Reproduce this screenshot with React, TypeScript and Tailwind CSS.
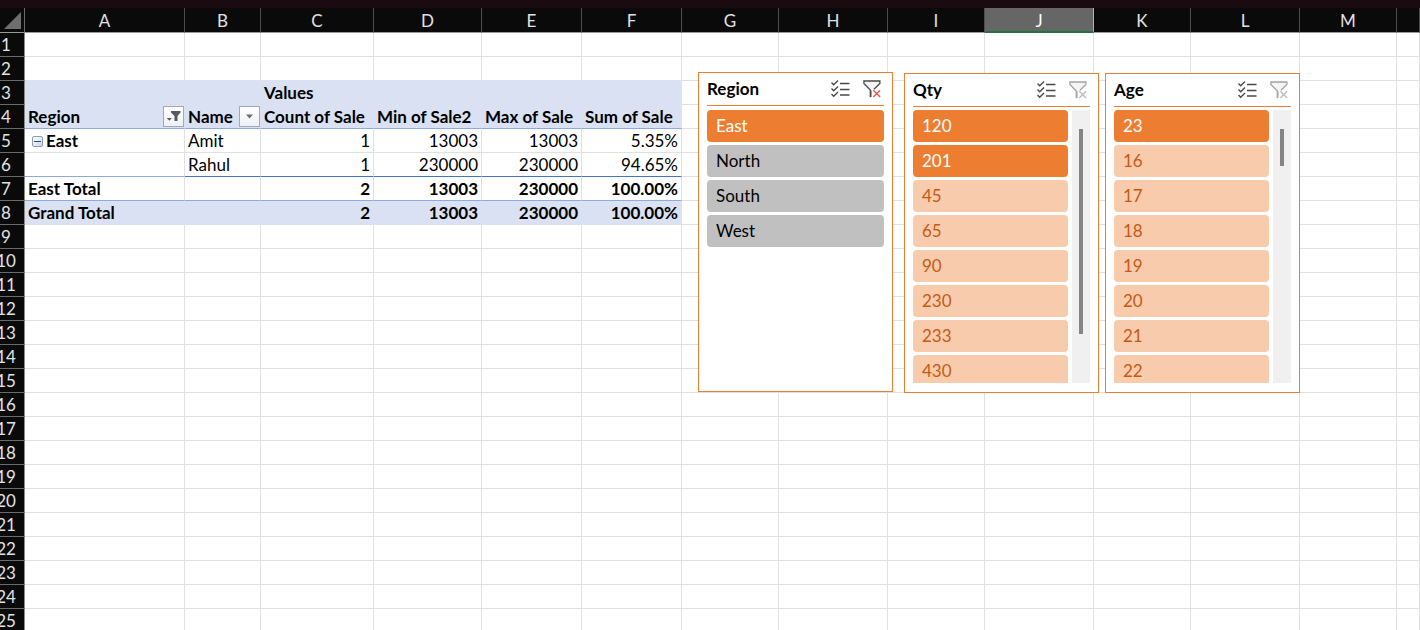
import type { ReactNode } from "react";

type Column = { letter: string; width: string; selected?: boolean };

const columns: Column[] = [
  { letter: "A", width: "w-[160px]" },
  { letter: "B", width: "w-[76px]" },
  { letter: "C", width: "w-[113px]" },
  { letter: "D", width: "w-[108px]" },
  { letter: "E", width: "w-[100px]" },
  { letter: "F", width: "w-[100px]" },
  { letter: "G", width: "w-[97px]" },
  { letter: "H", width: "w-[109px]" },
  { letter: "I", width: "w-[97px]" },
  { letter: "J", width: "w-[109px]", selected: true },
  { letter: "K", width: "w-[97px]" },
  { letter: "L", width: "w-[109px]" },
  { letter: "M", width: "w-[97px]" },
  { letter: "", width: "w-auto" },
];

const PIVOT_COLUMNS = 6;
const ROW_COUNT = 25;

function FilterButton({ label, active = false }: { label: string; active?: boolean }) {
  return (
    <button
      type="button"
      aria-label={label}
      className="flex size-[21px] shrink-0 items-center justify-center border border-[#a3a9b3] bg-linear-to-b from-white to-[#eef0f4]"
    >
      {active ? (
        <svg width="15" height="13" viewBox="0 0 15 13" fill="#58595b">
          <path d="M5 1h9.5v1.5L11.5 6v5h-3V6L5 2.5z" />
          <path d="M0.8 8h5L3.3 10.8z" />
        </svg>
      ) : (
        <svg width="9" height="5" viewBox="0 0 9 5" fill="#6b6d70">
          <path d="M1 0.5h7L4.5 4.5z" />
        </svg>
      )}
    </button>
  );
}

function FieldHeader({ name, active }: { name: string; active?: boolean }) {
  return (
    <div className="flex h-[23px] items-center justify-between">
      <span>{name}</span>
      <FilterButton label={`Filter ${name}`} active={active} />
    </div>
  );
}

function CollapsibleItem({ name }: { name: string }) {
  return (
    <div className="flex items-center gap-[3px] pl-1">
      <button
        type="button"
        aria-label={`Collapse ${name}`}
        className="mt-[2px] flex size-[11px] items-center justify-center rounded-[2px] border border-[#8c9cb4] bg-linear-to-br from-white to-[#cfd6e2]"
      >
        <span className="h-px w-[7px] bg-[#2f4a78]" />
      </button>
      <span>{name}</span>
    </div>
  );
}

const pivot: Record<number, ReactNode[]> = {
  3: ["", "", "Values", "", "", ""],
  4: [
    <FieldHeader name="Region" active />,
    <FieldHeader name="Name" />,
    "Count of Sale",
    "Min of Sale2",
    "Max of Sale",
    "Sum of Sale",
  ],
  5: [<CollapsibleItem name="East" />, "Amit", "1", "13003", "13003", "5.35%"],
  6: ["", "Rahul", "1", "230000", "230000", "94.65%"],
  7: ["East Total", "", "2", "13003", "230000", "100.00%"],
  8: ["Grand Total", "", "2", "13003", "230000", "100.00%"],
};

function cellStyle(row: number, col: number): string {
  const base = "h-6 p-0 border-r border-b whitespace-nowrap leading-[23px]";
  if (col >= PIVOT_COLUMNS || row < 2 || row > 8) return `${base} border-[#e0e0e0]`;
  const align = row > 4 && col > 1 ? "text-right pr-[3px]" : "text-left pl-[3px]";
  switch (row) {
    case 2:
      return `${base} border-r-[#e0e0e0] border-b-[#d9e1f2]`;
    case 3:
      return `${base} ${align} border-[#d9e1f2] bg-[#d9e1f2] font-bold`;
    case 4:
      return `${base} ${align} border-r-[#d9e1f2] border-b-[#8ea9db] bg-[#d9e1f2] font-bold`;
    case 5:
      return `${base} ${align} border-[#e0e0e0] ${col === 0 ? "font-bold" : ""}`;
    case 6:
      return `${base} ${align} border-r-[#e0e0e0] ${col === 0 ? "border-b-[#8ea9db]" : "border-b-[#4472c4]"}`;
    case 7:
      return `${base} ${align} border-r-[#e0e0e0] border-b-[#8ea9db] font-bold`;
    default:
      return `${base} ${align} border-[#d9e1f2] bg-[#d9e1f2] font-bold`;
  }
}

function Sheet() {
  return (
    <table className="w-full table-fixed border-separate border-spacing-0 text-black">
      <colgroup>
        <col className="w-[25px]" />
        {columns.map((c, i) => (
          <col key={i} className={c.width} />
        ))}
      </colgroup>
      <thead>
        <tr className="bg-[#0a0a0a] text-[#e2e2e2]">
          <th className="h-[25px] border-r border-b border-r-[#6a6a6a] border-b-[#9a9a9a] p-0">
            <svg className="ml-1" width="17" height="17" viewBox="0 0 17 17" fill="#6e6e6e">
              <path d="M17 0v17H0z" />
            </svg>
          </th>
          {columns.map((c, i) => (
            <th
              key={i}
              scope="col"
              className={
                c.selected
                  ? "h-[25px] border-r border-b-2 border-r-[#b0b0b0] border-b-[#217346] bg-[#666] p-0 pt-[2px] leading-[21px] font-normal text-white"
                  : "h-[25px] border-r border-b border-r-[#4d4d4d] border-b-[#9a9a9a] p-0 pt-[2px] leading-[22px] font-normal"
              }
            >
              {c.letter}
            </th>
          ))}
        </tr>
      </thead>
      <tbody>
        {Array.from({ length: ROW_COUNT }, (_, r) => r + 1).map((row) => (
          <tr key={row}>
            <th
              scope="row"
              className="h-6 border-r border-b border-r-[#8a8a8a] border-b-[#6a6a6a] bg-[#0a0a0a] p-0 leading-[23px] font-normal text-[#e2e2e2]"
            >
              <span className="-ml-3 flex justify-center">{row}</span>
            </th>
            {columns.map((_, col) => (
              <td key={col} className={cellStyle(row, col)}>
                {pivot[row]?.[col]}
              </td>
            ))}
          </tr>
        ))}
      </tbody>
    </table>
  );
}

function MultiSelectIcon() {
  return (
    <svg width="19" height="18" viewBox="0 0 19 18" fill="none" stroke="#4a4a4a" strokeWidth="1.4">
      <path d="M0.5 2.5l2.2 2.2L7 0.6M0.5 8.5l2.2 2.2L7 6.6M0.5 14l2.2 2.2L7 12.1" />
      <path d="M9 3.5h9.5M9 9.5h9.5M9 15h9.5" />
    </svg>
  );
}

function ClearFilterIcon({ active }: { active: boolean }) {
  return (
    <svg width="18" height="18" viewBox="0 0 18 18" fill="none">
      <path
        d="M11 9.2L16.9 3.5V1H0.9V3.5L7.3 10V17.2"
        fill="#f5f5f5"
        stroke={active ? "#4a4a4a" : "#a3a3a3"}
        strokeWidth="1.3"
      />
      <path d="M8 17V10.5" stroke={active ? "#4a4a4a" : "#a3a3a3"} />
      <path d="M10.3 10.3l6.8 6.8M17.1 10.3l-6.8 6.8" stroke={active ? "#e8554e" : "#bdbdbd"} strokeWidth="1.4" />
    </svg>
  );
}

type ItemState = "on" | "off" | "empty";

const itemColors: Record<ItemState, string> = {
  on: "bg-[#ed7d31] text-white",
  off: "bg-[#c0c0c0] text-black",
  empty: "bg-[#f8cbad] text-[#c55a11]",
};

type SlicerProps = {
  title: string;
  items: [string, ItemState][];
  place: string;
  filtered?: boolean;
  thumb?: string;
};

function Slicer({ title, items, place, filtered = false, thumb }: SlicerProps) {
  return (
    <section
      aria-label={title}
      className={`absolute flex h-[320px] w-[195px] flex-col border border-[#ed7d31] bg-white px-2 pb-[9px] ${place}`}
    >
      <header className="flex h-[33px] shrink-0 items-center border-b border-[#ed7d31] pr-[3px]">
        <h2 className="flex-1 font-bold">{title}</h2>
        <div className="flex gap-[13px]">
          <button type="button" aria-label="Multi-select">
            <MultiSelectIcon />
          </button>
          <button type="button" aria-label="Clear filter" disabled={!filtered}>
            <ClearFilterIcon active={filtered} />
          </button>
        </div>
      </header>
      <div className={`flex min-h-0 flex-1 gap-1 ${thumb ? "pt-[3px]" : "pt-1"}`}>
        <ul className="flex flex-1 flex-col gap-[3px] overflow-hidden">
          {items.map(([label, state]) => (
            <li key={label} className="flex shrink-0">
              <button
                type="button"
                aria-pressed={state === "on"}
                className={`h-8 flex-1 rounded-[4px] px-[9px] text-left ${itemColors[state]}`}
              >
                {label}
              </button>
            </li>
          ))}
        </ul>
        {thumb && (
          <div className="flex w-[18px] justify-center bg-[#f0f0f0] pt-[19px]">
            <div className={`w-1 bg-[#858585] ${thumb}`} />
          </div>
        )}
      </div>
    </section>
  );
}

export default function App() {
  return (
    <main className="relative h-screen overflow-hidden bg-white font-['Lato','Liberation_Sans',sans-serif] text-[17px]">
      <div className="h-2 bg-[#190b10]" />
      <Sheet />
      <Slicer
        title="Region"
        filtered
        place="left-[698px] top-[72px]"
        items={[
          ["East", "on"],
          ["North", "off"],
          ["South", "off"],
          ["West", "off"],
        ]}
      />
      <Slicer
        title="Qty"
        place="left-[904px] top-[73px]"
        thumb="h-[205px]"
        items={[
          ["120", "on"],
          ["201", "on"],
          ["45", "empty"],
          ["65", "empty"],
          ["90", "empty"],
          ["230", "empty"],
          ["233", "empty"],
          ["430", "empty"],
        ]}
      />
      <Slicer
        title="Age"
        place="left-[1105px] top-[73px]"
        thumb="h-[37px]"
        items={[
          ["23", "on"],
          ["16", "empty"],
          ["17", "empty"],
          ["18", "empty"],
          ["19", "empty"],
          ["20", "empty"],
          ["21", "empty"],
          ["22", "empty"],
        ]}
      />
    </main>
  );
}
